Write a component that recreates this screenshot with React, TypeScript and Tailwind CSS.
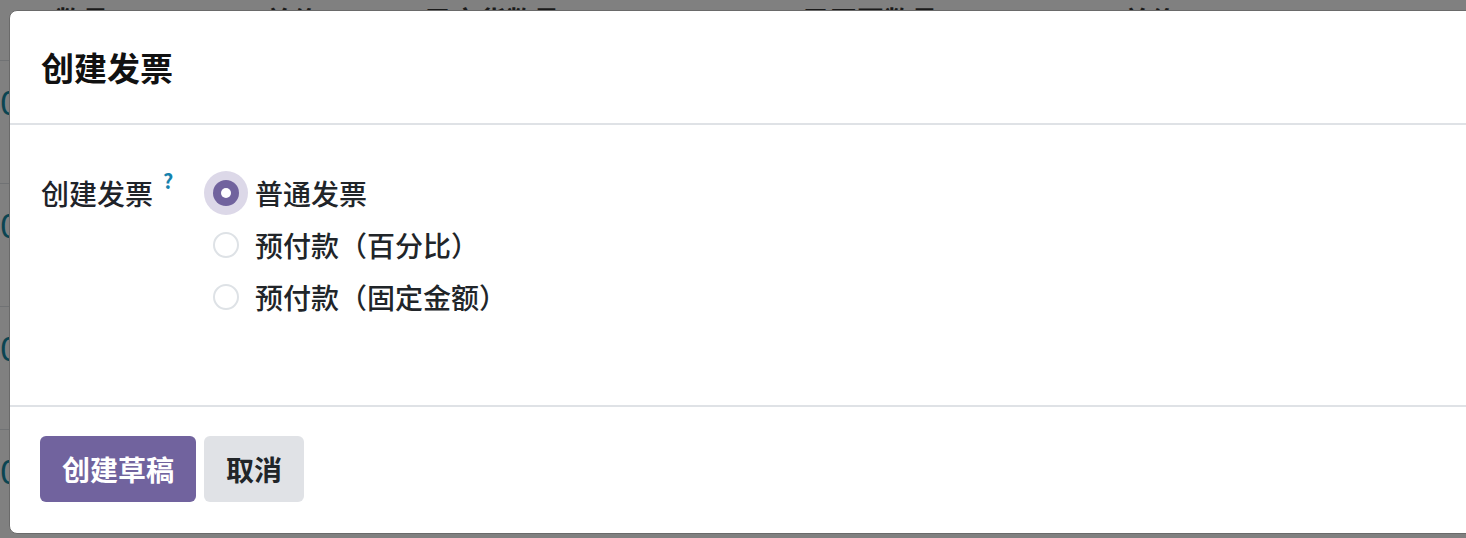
import React from "react";

const FONT = { fontFamily: '"Noto Sans CJK SC", "Noto Sans", sans-serif' };

const HEADER_COLS = [
  { label: "数量", left: "pl-[55px]", w: "w-[200px]" },
  { label: "单价", left: "pl-[65px]", w: "w-[225px]" },
  { label: "已交货数量", left: "pl-[0px]", w: "w-[378px]" },
  { label: "已开票数量", left: "pl-[0px]", w: "w-[320px]" },
  { label: "单价", left: "pl-[0px]", w: "w-[263px]" },
];

const OPTIONS = [
  { id: "delivered", label: "普通发票", checked: true },
  { id: "percentage", label: "预付款（百分比）", checked: false },
  { id: "fixed", label: "预付款（固定金额）", checked: false },
];

function Radio({ checked }: { checked: boolean }) {
  if (checked) {
    return (
      <span className="flex h-[26px] w-[26px] shrink-0 items-center justify-center rounded-full bg-[#71639e] shadow-[0_0_0_9px_#dcd8e8]">
        <span className="h-[10px] w-[10px] rounded-full bg-white" />
      </span>
    );
  }
  return (
    <span className="h-[26px] w-[26px] shrink-0 rounded-full border-2 border-[#dee2e6] bg-white" />
  );
}

export default function App() {
  return (
    <div
      className="relative h-[538px] w-[1466px] overflow-hidden bg-[#808080]"
      style={FONT}
    >
      {/* ── Dimmed page behind the dialog ── */}
      <div className="flex flex-col">
        <div className="flex h-[61px] items-start border-b border-[#707274] pt-[6px] text-[27px] font-bold leading-none text-[#1a1a1a]">
          {HEADER_COLS.map((c, i) => (
            <span key={i} className={`${c.w} ${c.left} shrink-0`}>
              {c.label}
            </span>
          ))}
        </div>
        {[0, 1, 2, 3].map((i) => (
          <div
            key={i}
            className="h-[123px] border-b border-[#707274] pt-[20px] text-[34px] leading-[40px] text-[#0b4552]"
          >
            <span>0</span>
          </div>
        ))}
      </div>

      {/* ── Dialog ── */}
      <div className="absolute left-[9px] top-[10px] flex h-[524px] w-[1490px] flex-col rounded-[8px] border border-[#6a6a6a] bg-white">
        <header className="flex h-[114px] shrink-0 items-center border-b-2 border-[#dfe2e6] px-[31px]">
          <h1 className="text-[33px] font-bold leading-none text-[#111]">
            创建发票
          </h1>
        </header>

        <div className="flex flex-1 items-start px-[31px] pt-[48px]">
          <div className="flex w-[172px] shrink-0 items-start">
            <span className="text-[28px] font-medium leading-[40px] text-[#1f2329]">
              创建发票
            </span>
            <sup className="ml-[10px] mt-[8px] text-[20px] font-bold leading-none text-[#1682ad]">
              ?
            </sup>
          </div>
          <div className="flex flex-col gap-[12px]">
            {OPTIONS.map((o) => (
              <label key={o.id} className="flex h-[40px] items-center gap-[16px]">
                <Radio checked={o.checked} />
                <span className="text-[28px] font-medium leading-none text-[#212529]">
                  {o.label}
                </span>
              </label>
            ))}
          </div>
        </div>

        <footer className="flex h-[128px] shrink-0 items-center gap-[8px] border-t-2 border-[#dfe2e6] px-[30px] pb-[2px]">
          <button
            type="button"
            className="flex h-[66px] items-center rounded-[6px] bg-[#71639e] px-[22px] text-[28px] font-bold text-white"
          >
            创建草稿
          </button>
          <button
            type="button"
            className="flex h-[66px] items-center rounded-[6px] bg-[#e0e2e6] px-[22px] text-[28px] font-bold text-[#212529]"
          >
            取消
          </button>
        </footer>
      </div>
    </div>
  );
}
